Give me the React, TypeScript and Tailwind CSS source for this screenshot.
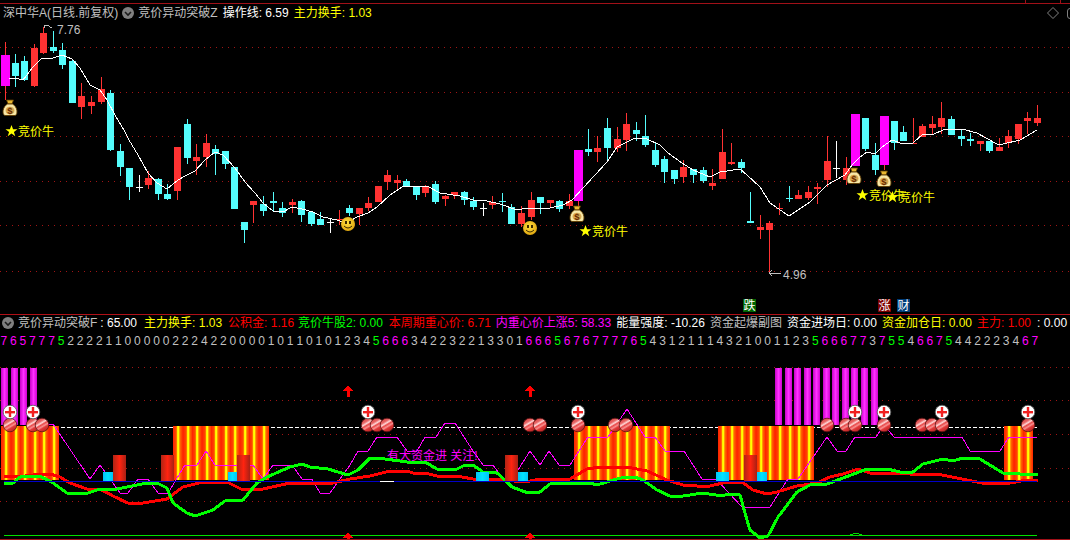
import React from "react";

const GAP = 9.556;
const cx = (i: number) => 5 + GAP * i;

// kind, body top, body bottom, wick high, wick low
type K = "r" | "c" | "m" | "w";
const CANDLES: [K, number, number, number, number][] = [
  ["m", 55, 86, 42, 100], ["c", 63, 76, 54, 87], ["c", 61, 80, 56, 81], ["r", 48, 86, 44, 87], ["r", 33, 53, 27, 54],
  ["c", 47, 51, 31, 53], ["c", 50, 65, 43, 69], ["c", 61, 103, 60, 103], ["r", 96, 107, 83, 119], ["r", 102, 106, 96, 114],
  ["r", 89, 102, 77, 104], ["c", 93, 150, 90, 151], ["c", 151, 167, 144, 176], ["c", 168, 187, 168, 200], ["w", 187, 188, 175, 192],
  ["r", 178, 185, 171, 189], ["c", 179, 194, 178, 200], ["c", 194, 199, 184, 200], ["r", 147, 191, 147, 200], ["c", 124, 158, 119, 164],
  ["r", 157, 161, 144, 175], ["r", 143, 157, 134, 167], ["c", 149, 154, 145, 175], ["c", 151, 164, 151, 169], ["c", 167, 209, 167, 209],
  ["c", 222, 230, 222, 243], ["r", 201, 205, 201, 223], ["c", 204, 211, 196, 216], ["c", 201, 203, 192, 211], ["c", 208, 213, 202, 217],
  ["r", 202, 205, 199, 213], ["c", 201, 215, 200, 222], ["c", 212, 224, 212, 226], ["c", 219, 225, 212, 225], ["w", 222, 223, 218, 233],
  ["r", 219, 220, 210, 225], ["c", 208, 213, 205, 216], ["r", 208, 214, 208, 225], ["r", 203, 208, 197, 211], ["r", 186, 202, 186, 202],
  ["r", 175, 182, 170, 190], ["r", 180, 183, 175, 190], ["c", 181, 186, 179, 186], ["c", 186, 195, 186, 200], ["r", 187, 193, 185, 197],
  ["c", 184, 202, 181, 204], ["r", 196, 199, 195, 206], ["r", 192, 195, 192, 199], ["c", 192, 200, 191, 205], ["c", 201, 207, 197, 210],
  ["w", 208, 209, 203, 216], ["r", 202, 205, 196, 209], ["c", 201, 202, 193, 212], ["c", 207, 224, 204, 224], ["r", 213, 224, 206, 227],
  ["r", 200, 217, 192, 220], ["c", 197, 203, 197, 214], ["r", 200, 203, 200, 208], ["c", 201, 209, 200, 212], ["r", 201, 206, 194, 209],
  ["m", 150, 201, 150, 207], ["c", 149, 152, 129, 156], ["r", 148, 152, 136, 162], ["c", 128, 148, 118, 161], ["r", 139, 148, 127, 152],
  ["r", 124, 140, 113, 151], ["c", 130, 134, 122, 141], ["c", 136, 145, 115, 147], ["c", 150, 165, 142, 167], ["c", 159, 172, 156, 183],
  ["c", 170, 179, 170, 184], ["r", 167, 177, 160, 183], ["c", 169, 175, 169, 183], ["c", 170, 181, 167, 183], ["r", 183, 186, 169, 190],
  ["r", 152, 179, 129, 179], ["r", 162, 164, 143, 165], ["c", 162, 168, 159, 173], ["c", 221, 223, 192, 223], ["r", 227, 230, 215, 239],
  ["r", 223, 230, 221, 273], ["r", 208, 209, 203, 215], ["c", 198, 199, 186, 202], ["r", 195, 199, 190, 199], ["r", 192, 198, 186, 200],
  ["r", 187, 189, 183, 204], ["r", 161, 180, 136, 187], ["w", 168, 169, 141, 178], ["r", 168, 180, 157, 185], ["m", 114, 166, 114, 166],
  ["c", 118, 149, 118, 151], ["c", 155, 170, 143, 175], ["m", 116, 165, 116, 170], ["c", 121, 143, 121, 150], ["c", 132, 141, 126, 141],
  ["r", 143, 144, 118, 144], ["r", 126, 137, 124, 137], ["r", 124, 128, 116, 135], ["r", 118, 127, 102, 134], ["c", 119, 135, 116, 135],
  ["c", 136, 139, 130, 146], ["c", 139, 141, 133, 146], ["r", 141, 144, 141, 151], ["c", 141, 151, 141, 153], ["r", 147, 151, 138, 151],
  ["r", 136, 143, 130, 148], ["r", 124, 139, 124, 144], ["r", 118, 121, 112, 134], ["r", 118, 123, 105, 126],
];

const MA = "9,78 15,78 23,80 33,67 42,58 53,58 62,55 72,59 80,68 90,85 100,90 107,100 115,115 125,132 129,140 138,155 148,173 157,183 167,189 178,180 187,175 195,171 205,160 215,152 223,155 235,168 245,182 255,193 263,203 273,211 283,212 292,207 302,209 313,212 323,217 337,220 347,223 357,217 368,213 377,207 390,195 402,187 427,186 440,193 460,196 473,200 487,201 500,204 517,210 527,208 550,208 563,205 572,200 583,188 595,175 607,162 617,147 627,142 635,138 647,139 660,145 668,153 682,163 693,170 710,177 720,172 740,169 747,175 760,187 770,203 789,216 810,202 827,185 845,175 852,165 860,157 867,152 875,154 882,147 892,140 903,144 913,143 923,134 932,135 943,130 962,129 977,133 997,144 1003,144 1020,140 1037,130";

const PINK = "37,424 53,424 90,479 100,465 110,479 120,493 128,493 138,479 148,479 158,493 168,493 185,465 197,465 206,451 215,465 253,465 263,479 273,465 292,465 302,479 312,479 320,493 330,493 350,465 358,451 368,451 377,437 397,437 407,451 417,451 425,437 436,437 445,423 455,423 473,451 483,465 493,465 503,479 518,470 530,451 540,465 549,451 559,465 570,465 588,437 608,437 627,409 645,437 655,437 665,451 684,451 702,479 716,479 742,507 770,507 788,479 798,479 827,437 837,451 846,451 855,437 876,437 884,425 894,437 962,437 970,451 1000,451 1009,437 1037,437";

const RED = "4,476 17,477 33,475 50,474 60,477 70,483 87,489 100,489 113,496 130,504 143,503 167,499 183,487 203,482 227,482 243,490 263,489 290,483 333,483 350,479 370,476 390,471 407,471 413,473 425,473 437,476 462,477 473,479 502,480 525,482 540,479 570,479 587,469 600,467 627,467 647,471 667,480 683,485 697,486 710,486 723,483 742,482 753,490 767,494 777,492 797,486 817,483 830,477 843,474 858,469 873,474 890,473 910,474 942,475 967,480 987,484 1010,483 1027,480 1038,480";

const GREEN = "4,484 13,483 20,477 40,476 53,483 67,493 88,493 100,489 117,489 147,483 157,483 167,488 173,503 187,513 195,516 213,510 225,501 243,500 257,483 267,477 290,467 302,464 310,467 328,469 348,475 358,470 370,458 378,458 407,462 425,462 437,469 457,469 465,465 473,465 483,472 497,473 505,480 512,487 528,493 540,492 550,484 567,483 590,483 597,485 607,482 613,480 625,477 635,477 643,480 657,490 670,496 683,496 703,493 722,496 728,494 740,495 747,520 750,530 760,538 768,536 778,517 797,492 810,485 827,484 843,478 867,469 887,469 900,472 913,472 923,464 943,459 953,461 963,458 980,459 1003,473 1020,474 1038,474";

const DIGITS = [
  "7657775", "222211", "00000", "222422", "000010110101234", "5", "666", "342232213301", "666", "5", "676", "7777", "65",
  "43121114321001123", "5", "666", "77", "3", "7", "55", "4", "66", "7", "5", "44", "222", "34", "67",
].join("");

const PINK_BARS = [0, 1, 2, 3, 81, 82, 83, 84, 85, 86, 87, 88, 89, 90, 91];
const STRIPES = [
  0, 1, 2, 3, 4, 5, 18, 19, 20, 21, 22, 23, 24, 25, 26, 27, 60, 61, 62, 63, 64, 65, 66, 67, 68, 69, 75, 76, 77, 78, 79, 80, 81, 82, 83, 84, 105, 106, 107,
];
const BALLS = [10, 33, 42, 368, 377, 387, 530, 540, 578, 615, 626, 827, 846, 855, 884, 922, 932, 942, 1028];
const PLUS = [10, 33, 368, 578, 855, 884, 942, 1028];
const BLOCK_RED = [113, 161, 237, 505, 744];
const BLOCK_CYAN: [number, number][] = [[103, 10], [228, 9], [476, 13], [518, 10], [716, 13], [757, 10]];

function digitColor(d: string, i: number) {
  if (d === "6" || d === "7" || i === 2) return "text-[#ff00ff]";
  if (d === "5") return "text-[#00ff00]";
  return "text-[#c0c0c0]";
}

function Chevron() {
  return (
    <svg width="12" height="12" viewBox="0 0 12 12" className="shrink-0">
      <circle cx="6" cy="6" r="6" fill="#808080" />
      <polyline points="3,5 6,8 9,5" fill="none" stroke="#1c1c1c" strokeWidth="1.6" />
    </svg>
  );
}

function MoneyBag({ x, y }: { x: number; y: number }) {
  return (
    <g transform={`translate(${x} ${y})`}>
      <path d="M-3.5 0 L3.5 0 L2 4 L-2 4 Z" fill="#e8b830" stroke="#5c3a00" strokeWidth="0.8" />
      <path d="M-2.5 4 C-8 7 -8 15 -5 15.5 L5 15.5 C8 15 8 7 2.5 4 Z" fill="#f8e8a8" stroke="#5c3a00" strokeWidth="0.9" />
      <ellipse cx="0" cy="10.5" rx="4.4" ry="3.8" fill="#d8a850" />
      <text x="0" y="14" textAnchor="middle" fontSize="9.5" fontWeight="700" fill="#6a2c00">$</text>
    </g>
  );
}

function Smiley({ x, y }: { x: number; y: number }) {
  return (
    <g>
      <circle cx={x} cy={y} r="7" fill="url(#smile)" />
      <rect x={x - 3} y={y - 3} width="2" height="3" fill="#3a2a00" />
      <rect x={x + 1} y={y - 3} width="2" height="3" fill="#3a2a00" />
      <path d={`M${x - 4} ${y + 2} Q${x} ${y + 6} ${x + 4} ${y + 2}`} fill="none" stroke="#3a2a00" strokeWidth="1" />
    </g>
  );
}

function Cow({ x, y }: { x: number; y: number }) {
  const s = x + 5.5;
  const t = y - 5;
  return (
    <g>
      <polygon
        points={`${s},${t - 6} ${s + 1.6},${t - 1.8} ${s + 6},${t - 1.8} ${s + 2.4},${t + 1} ${s + 3.8},${t + 5.2} ${s},${t + 2.6} ${s - 3.8},${t + 5.2} ${s - 2.4},${t + 1} ${s - 6},${t - 1.8} ${s - 1.6},${t - 1.8}`}
        fill="#ffff00"
      />
      <text x={x + 12} y={y} fontSize="12" fill="#ffff00">竞价牛</text>
    </g>
  );
}

function Badge({ x, bg, label }: { x: number; bg: string; label: string }) {
  return (
    <g>
      <rect x={x} y={299} width="13" height="13" fill={bg} />
      <text x={x + 0.5} y={310} fontSize="12" fill="#ffffff">{label}</text>
    </g>
  );
}

function Arrows({ x }: { x: number }) {
  return (
    <g fill="#ff0000" shapeRendering="crispEdges">
      <polygon points={`${x},385 ${x + 5},391 ${x - 5},391`} />
      <rect x={x - 1} y={390} width="3" height="7" />
      <polygon points={`${x},532 ${x + 5},538 ${x - 5},538`} />
      <rect x={x - 1} y={537} width="3" height="2" />
    </g>
  );
}

function PriceChart() {
  return (
    <svg width="1070" height="292" viewBox="0 22 1070 292" className="block">
      <defs>
        <radialGradient id="smile" cx="0.45" cy="0.4" r="0.6">
          <stop offset="0" stopColor="#ffe040" />
          <stop offset="1" stopColor="#e0a810" />
        </radialGradient>
      </defs>
      <g stroke="#a01414" strokeDasharray="1 5" shapeRendering="crispEdges">
        {[47, 92, 136, 181, 225, 271].map((y) => (
          <line key={y} x1="0" x2="1070" y1={y + 0.5} y2={y + 0.5} />
        ))}
      </g>
      <g shapeRendering="crispEdges">
        {CANDLES.map(([k, top, bot, hi, lo], i) => {
          const c = Math.round(cx(i));
          const fill = k === "r" ? "#ff3232" : k === "c" ? "#54fcfc" : k === "m" ? "#ff00ff" : "#ffffff";
          const wick = k === "m" ? "#ff3232" : fill;
          const w = k === "m" ? 9 : 7;
          return (
            <g key={i}>
              <rect x={c} y={hi} width="1" height={lo - hi} fill={wick} />
              <rect x={c - (w - 1) / 2} y={top} width={w} height={bot - top} fill={fill} />
            </g>
          );
        })}
      </g>
      <polyline points={MA} fill="none" stroke="#ffffff" strokeWidth="1" shapeRendering="crispEdges" />
      <polyline points="44,28 44,25 47,25 52,28" fill="none" stroke="#c0c0c0" strokeWidth="1" shapeRendering="crispEdges" />
      <text x="57" y="34" fontSize="12" fill="#c0c0c0">7.76</text>
      <polyline points="772,270 769,273 772,276" fill="none" stroke="#c0c0c0" strokeWidth="1" shapeRendering="crispEdges" />
      <line x1="769" x2="781" y1="273.5" y2="273.5" stroke="#c0c0c0" shapeRendering="crispEdges" />
      <text x="783" y="279" fontSize="12" fill="#c0c0c0">4.96</text>
      <MoneyBag x={10} y={100} />
      <MoneyBag x={577} y={206} />
      <MoneyBag x={854} y={168} />
      <MoneyBag x={884} y={171} />
      <Smiley x={348} y={224} />
      <Smiley x={530} y={228} />
      <Cow x={6} y={136} />
      <Cow x={580} y={236} />
      <Cow x={857} y={200} />
      <Cow x={887} y={202} />
      <Badge x={743} bg="#006400" label="跌" />
      <Badge x={878} bg="#7c0000" label="涨" />
      <Badge x={897} bg="#003c78" label="财" />
    </svg>
  );
}

function IndicatorChart() {
  return (
    <svg width="1070" height="188" viewBox="0 351 1070 188" className="block">
      <defs>
        <linearGradient id="pinkBar">
          <stop offset="0" stopColor="#c800c8" />
          <stop offset="0.5" stopColor="#ff30ff" />
          <stop offset="1" stopColor="#d000d0" />
        </linearGradient>
        <linearGradient id="stripe">
          <stop offset="0" stopColor="#ff2000" />
          <stop offset="0.32" stopColor="#ff4800" />
          <stop offset="0.42" stopColor="#ffc000" />
          <stop offset="0.46" stopColor="#ffff00" />
          <stop offset="0.58" stopColor="#ffff00" />
          <stop offset="0.68" stopColor="#ff7000" />
          <stop offset="1" stopColor="#ff2000" />
        </linearGradient>
        <linearGradient id="redBar">
          <stop offset="0" stopColor="#b02414" />
          <stop offset="0.5" stopColor="#ff2410" />
          <stop offset="1" stopColor="#a82014" />
        </linearGradient>
        <linearGradient id="cyanBar">
          <stop offset="0" stopColor="#00c4f8" />
          <stop offset="0.5" stopColor="#00e4ff" />
          <stop offset="1" stopColor="#00c4f8" />
        </linearGradient>
        <linearGradient id="ball" x1="0.15" y1="0" x2="0.75" y2="1">
          <stop offset="0" stopColor="#d83838" />
          <stop offset="0.28" stopColor="#e86868" />
          <stop offset="0.4" stopColor="#ffd8d8" />
          <stop offset="0.5" stopColor="#e84848" />
          <stop offset="0.62" stopColor="#f89090" />
          <stop offset="0.72" stopColor="#e03838" />
          <stop offset="1" stopColor="#b02020" />
        </linearGradient>
      </defs>
      <g stroke="#a01414" strokeDasharray="1 5" shapeRendering="crispEdges">
        {[367, 400, 434, 468, 501].map((y) => (
          <line key={y} x1="0" x2="1070" y1={y + 0.5} y2={y + 0.5} />
        ))}
      </g>
      <line x1="1" x2="1037" y1="427.5" y2="427.5" stroke="#ffffff" strokeDasharray="4 2" shapeRendering="crispEdges" />
      <line x1="4" x2="1037" y1="535.5" y2="535.5" stroke="#00e000" shapeRendering="crispEdges" />
      <polyline points="850,535 856,533 862,535" fill="none" stroke="#00e000" shapeRendering="crispEdges" />
      <g shapeRendering="crispEdges">
        {PINK_BARS.map((i) => (
          <rect key={i} x={Math.round(cx(i)) - 4} y="368" width="7" height="57" fill="url(#pinkBar)" />
        ))}
        {STRIPES.map((i) => (
          <rect key={i} x={Math.round(cx(i)) - 4} y="426" width="10" height="54" fill="url(#stripe)" />
        ))}
      </g>
      <text x="387" y="460" fontSize="12" fill="#ff00ff">有大资金进 关注!</text>
      <polyline points={PINK} fill="none" stroke="#ff00ff" strokeWidth="1" shapeRendering="crispEdges" />
      <polyline points={RED} fill="none" stroke="#ff0000" strokeWidth="3" strokeLinejoin="round" shapeRendering="crispEdges" />
      <polyline points={GREEN} fill="none" stroke="#00ff00" strokeWidth="3" strokeLinejoin="round" shapeRendering="crispEdges" />
      <g shapeRendering="crispEdges">
        {BLOCK_RED.map((x) => (
          <rect key={x} x={x} y="455" width="13" height="26" fill="url(#redBar)" />
        ))}
        {BLOCK_CYAN.map(([x, w]) => (
          <rect key={x} x={x} y="472" width={w} height="9" fill="url(#cyanBar)" />
        ))}
      </g>
      <line x1="4" x2="1037" y1="481.5" y2="481.5" stroke="#0000c8" shapeRendering="crispEdges" />
      <line x1="380" x2="394" y1="481.5" y2="481.5" stroke="#ffffff" shapeRendering="crispEdges" />
      <Arrows x={348} />
      <Arrows x={530} />
      {BALLS.map((x, i) => (
        <circle key={i} cx={x} cy="425" r="6.8" fill="url(#ball)" stroke="#5a1414" strokeWidth="0.8" />
      ))}
      {PLUS.map((x) => (
        <g key={x}>
          <circle cx={x} cy="412" r="6.8" fill="#ffffff" stroke="#555555" strokeWidth="0.8" />
          <rect x={x - 5} y="411" width="10" height="2.4" fill="#f02020" />
          <rect x={x - 1.2} y="407" width="2.4" height="10" fill="#f02020" />
        </g>
      ))}
    </svg>
  );
}

export default function App() {
  return (
    <div className="w-[1070px] h-[540px] bg-black overflow-hidden font-['Liberation_Sans','Noto_Sans_CJK_SC',sans-serif] text-[12px] leading-none whitespace-nowrap">
      <svg width="1070" height="4" viewBox="0 0 1070 4" className="block">
        <g fill="#a01018" shapeRendering="crispEdges">
          <rect x="0" y="3" width="1070" height="1" />
          <rect x="1025" y="0" width="1" height="3" />
          <rect x="1060" y="0" width="1" height="3" />
        </g>
      </svg>
      <div className="h-[18px] flex items-center pl-[3px]">
        <span className="text-[#c0c0c0]">深中华A(日线.前复权)</span>
        <span className="ml-[4px]"><Chevron /></span>
        <span className="ml-[4px] text-[#c0c0c0]">竞价异动突破Z</span>
        <span className="ml-[5px] text-white">操作线: 6.59</span>
        <span className="ml-[5px] text-[#ffff00]">主力换手: 1.03</span>
        <svg width="12" height="12" viewBox="0 0 12 12" className="ml-auto shrink-0">
          <polygon points="6,0.5 11.5,6 6,11.5 0.5,6" fill="none" stroke="#808080" />
        </svg>
        <span className="ml-[8px] -mr-[5px] w-[8px] h-[11px] border border-[#808080] rounded-[3px] shrink-0" />
      </div>
      <PriceChart />
      <div className="border-t border-[#b01018] h-[17px] flex items-center pl-[2px]">
        <Chevron />
        <span className="ml-[4px] text-[#c0c0c0]">竞价异动突破F</span>
        <span className="ml-[3px] text-white">: 65.00</span>
        <span className="ml-[7px] text-[#ffff00]">主力换手: 1.03</span>
        <span className="ml-[6px] text-[#ff0000]">公积金: 1.16</span>
        <span className="ml-[4px] text-[#00ff00]">竞价牛股2: 0.00</span>
        <span className="ml-[6px] text-[#ff0000]">本周期重心价: 6.71</span>
        <span className="ml-[5px] text-[#ff00ff]">内重心价上涨5: 58.33</span>
        <span className="ml-[5px] text-white">能量强度: -10.26</span>
        <span className="ml-[5px] text-[#c0c0c0]">资金起爆副图</span>
        <span className="ml-[5px] text-white">资金进场日: 0.00</span>
        <span className="ml-[5px] text-[#ffff00]">资金加仓日: 0.00</span>
        <span className="ml-[5px] text-[#ff0000]">主力: 1.00</span>
        <span className="ml-[6px] text-white">: 0.00</span>
      </div>
      <div className="h-[20px] -ml-[1px] grid grid-cols-[repeat(109,9.556px)] items-center">
        {DIGITS.split("").map((d, i) => (
          <span key={i} className={"text-center " + digitColor(d, i)}>{d}</span>
        ))}
      </div>
      <IndicatorChart />
      <div className="h-px bg-[#a01018]" />
    </div>
  );
}
